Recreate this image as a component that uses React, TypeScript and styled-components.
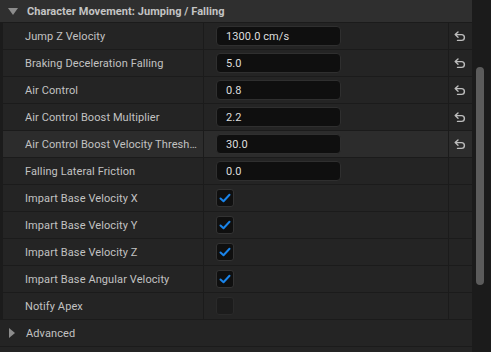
import styled, { createGlobalStyle } from "styled-components";

const GlobalStyle = createGlobalStyle`
  html, body {
    margin: 0;
    padding: 0;
    background: #242424;
    overflow: hidden;
  }
  body {
    font-family: Roboto, "Liberation Sans", sans-serif;
  }
`;

//styles
const Page = styled.div`
  display: flex;
  width: 491px;
  height: 352px;
  overflow: hidden;
  background: #242424;
`;

const Panel = styled.div`
  flex: 1;
  display: flex;
  flex-direction: column;
  min-width: 0;
`;

const Header = styled.div`
  display: flex;
  align-items: center;
  gap: 8px;
  height: 22px;
  flex-shrink: 0;
  padding-left: 8px;
  background: #2f2f2f;
  border-bottom: 1px solid #1b1b1b;
  color: #c4c4c4;
  font-size: 11px;
  font-weight: 700;
  letter-spacing: 0.06px;
`;

const Caret = styled.span<{ $open?: boolean }>`
  width: 0;
  height: 0;
  ${(p) =>
    p.$open
      ? `
    border-left: 5px solid transparent;
    border-right: 5px solid transparent;
    border-top: 7px solid #8c8c8c;
    margin-right: 1px;
  `
      : `
    border-top: 5.5px solid transparent;
    border-bottom: 5.5px solid transparent;
    border-left: 6px solid #8c8c8c;
    margin-left: 2px;
    margin-right: 3px;
  `}
`;

const List = styled.div`
  display: flex;
  flex-direction: column;
  padding-left: 3px;
  background: #1b1b1b;
`;

const Row = styled.div<{ $hover?: boolean }>`
  display: grid;
  grid-template-columns: 201px 245px 21px;
  height: 27px;
  box-sizing: border-box;
  border-bottom: 1px solid #1b1b1b;
  background: ${(p) => (p.$hover ? "#2c2c2c" : "#242424")};
`;

const Name = styled.div`
  display: flex;
  align-items: center;
  padding-left: 22px;
  border-right: 1px solid #1b1b1b;
  color: #c2c2c2;
  font-size: 11px;
  letter-spacing: 0.1px;
  white-space: nowrap;
  overflow: hidden;
`;

const Value = styled.div`
  display: flex;
  align-items: center;
  padding-left: 12px;
  border-right: 1px solid #1b1b1b;
`;

const Input = styled.div`
  width: 125px;
  height: 20px;
  box-sizing: border-box;
  display: flex;
  align-items: center;
  padding-left: 9px;
  background: #0f0f0f;
  border: 1px solid #2f2f2f;
  border-radius: 4px;
  color: #dedede;
  font-size: 11px;
  letter-spacing: 0.1px;
`;

const Check = styled.div<{ $on?: boolean }>`
  width: 18px;
  height: 18px;
  box-sizing: border-box;
  display: flex;
  align-items: center;
  justify-content: center;
  border-radius: 3px;
  border: 1px solid ${(p) => (p.$on ? "#333" : "#2a2a2a")};
  background: ${(p) => (p.$on ? "#0f0f0f" : "#1c1c1c")};
`;

const Reset = styled.div`
  display: flex;
  align-items: center;
  justify-content: center;
  padding-left: 1px;
`;

const Advanced = styled.div`
  display: flex;
  align-items: center;
  gap: 8px;
  height: 27px;
  box-sizing: border-box;
  padding-left: 7px;
  border-bottom: 1px solid #1b1b1b;
  background: #242424;
  color: #c2c2c2;
  font-size: 11px;
  letter-spacing: 0.1px;
`;

const Track = styled.div`
  width: 19px;
  flex-shrink: 0;
  background: #1b1b1b;
  padding: 67px 0 0 4px;
  box-sizing: border-box;
`;

const Thumb = styled.div`
  width: 8px;
  height: 218px;
  border-radius: 4px;
  background: #5b5b5b;
`;

function ResetIcon() {
  return (
    <svg width="12" height="11" viewBox="0 0 12 11" fill="none">
      <path
        d="M4 1 L1.2 3.6 L4 6.2 M1.5 3.6 H7.5 A2.9 2.9 0 0 1 7.5 9.4 H3.5"
        stroke="#bdbdbd"
        strokeWidth="1.4"
        strokeLinecap="round"
        strokeLinejoin="round"
      />
    </svg>
  );
}

function Tick() {
  return (
    <svg width="12" height="10" viewBox="0 0 12 10" fill="none">
      <path
        d="M1.5 5.5 L4.5 8.2 L10.5 1.8"
        stroke="#1a84ea"
        strokeWidth="2"
        strokeLinecap="round"
        strokeLinejoin="round"
      />
    </svg>
  );
}

type Prop = {
  name: string;
  value?: string;
  check?: boolean;
  reset?: boolean;
  hover?: boolean;
};

const props: Prop[] = [
  { name: "Jump Z Velocity", value: "1300.0 cm/s", reset: true },
  { name: "Braking Deceleration Falling", value: "5.0", reset: true },
  { name: "Air Control", value: "0.8", reset: true },
  { name: "Air Control Boost Multiplier", value: "2.2", reset: true },
  { name: "Air Control Boost Velocity Thresh…", value: "30.0", reset: true, hover: true },
  { name: "Falling Lateral Friction", value: "0.0" },
  { name: "Impart Base Velocity X", check: true },
  { name: "Impart Base Velocity Y", check: true },
  { name: "Impart Base Velocity Z", check: true },
  { name: "Impart Base Angular Velocity", check: true },
  { name: "Notify Apex", check: false },
];

export default function App() {
  return (
    <>
      <GlobalStyle />
      <Page>
        <Panel>
          <Header>
            <Caret $open />
            Character Movement: Jumping / Falling
          </Header>
          <List>
            {props.map((p) => (
              <Row key={p.name} $hover={p.hover}>
                <Name>{p.name}</Name>
                <Value>
                  {p.value !== undefined ? (
                    <Input>{p.value}</Input>
                  ) : (
                    <Check $on={p.check}>{p.check && <Tick />}</Check>
                  )}
                </Value>
                <Reset>{p.reset && <ResetIcon />}</Reset>
              </Row>
            ))}
          </List>
          <Advanced>
            <Caret />
            Advanced
          </Advanced>
        </Panel>
        <Track>
          <Thumb />
        </Track>
      </Page>
    </>
  );
}
